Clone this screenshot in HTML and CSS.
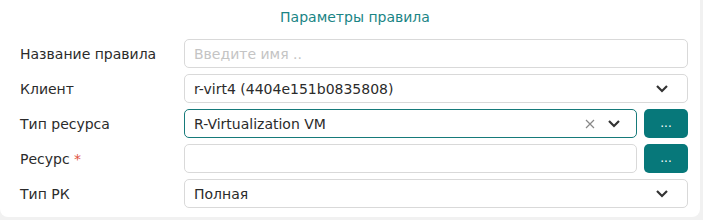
FILE: index.html
```html
<!DOCTYPE html>
<html lang="ru">
<head>
    <meta charset="UTF-8">
    <title>Параметры правила</title>
    <link rel="stylesheet" href="styles.css">
</head>
<body>
    <div class="card">
        <div class="card-title">Параметры правила</div>

        <div class="form">
            <!-- название -->
            <div class="row">
                <label class="label">Название правила</label>
                <div class="control">
                    <input class="field" type="text" placeholder="Введите имя ..">
                </div>
            </div>

            <!-- клиент -->
            <div class="row">
                <label class="label">Клиент</label>
                <div class="control">
                    <div class="field select">
                        <span class="value">r-virt4 (4404e151b0835808)</span>
                        <svg class="chevron" width="14" height="9" viewBox="0 0 14 9"><path d="M2 2l5 5 5-5" fill="none" stroke="#333" stroke-width="2.2"/></svg>
                    </div>
                </div>
            </div>

            <!-- тип ресурса -->
            <div class="row">
                <label class="label">Тип ресурса</label>
                <div class="control">
                    <div class="field select active">
                        <span class="value">R-Virtualization VM</span>
                        <svg class="clear" width="10" height="10" viewBox="0 0 10 10"><path d="M1 1l8 8M9 1l-8 8" fill="none" stroke="#888" stroke-width="1.2"/></svg>
                        <svg class="chevron" width="14" height="9" viewBox="0 0 14 9"><path d="M2 2l5 5 5-5" fill="none" stroke="#333" stroke-width="2.2"/></svg>
                    </div>
                    <button class="btn-more">...</button>
                </div>
            </div>

            <!-- ресурс -->
            <div class="row">
                <label class="label">Ресурс <span class="req">*</span></label>
                <div class="control">
                    <input class="field" type="text">
                    <button class="btn-more">...</button>
                </div>
            </div>

            <!-- тип РК -->
            <div class="row">
                <label class="label">Тип РК</label>
                <div class="control">
                    <div class="field select">
                        <span class="value">Полная</span>
                        <svg class="chevron" width="14" height="9" viewBox="0 0 14 9"><path d="M2 2l5 5 5-5" fill="none" stroke="#333" stroke-width="2.2"/></svg>
                    </div>
                </div>
            </div>
        </div>
    </div>
</body>
</html>
```

FILE: styles.css
```css
/* общие стили */
body, html {
    margin: 0;
    padding: 0;
    background-color: #f1f1f1;
    font-family: 'DejaVu Sans', sans-serif;
    font-size: 14px;
    color: #2b2b2b;
}

/* карточка */
.card {
    width: 700px;
    height: 217px;
    box-sizing: border-box;
    background: #fff;
    border-radius: 0 0 8px 8px;
    padding: 7px 12px 0 20px;
}

.card-title {
    text-align: center;
    color: #1a8585;
    font-size: 14px;
    line-height: 20px;
    margin-bottom: 12px;
    padding-left: 2px;
}

/* форма */
.form {
    display: flex;
    flex-direction: column;
    gap: 6px;
}

.row {
    display: flex;
    align-items: center;
    height: 29px;
}

.label {
    width: 164px;
    flex-shrink: 0;
}

.req {
    color: #e0533f;
}

.control {
    flex: 1;
    display: flex;
    gap: 7px;
    height: 29px;
}

.field {
    flex: 1;
    box-sizing: border-box;
    height: 29px;
    border: 1px solid #d9d9d9;
    border-radius: 5px;
    padding: 0 9px;
    font-family: inherit;
    font-size: 14px;
    color: #2b2b2b;
    background: #fff;
    outline: none;
    margin: 0;
}

.field::placeholder {
    color: #c4c4c4;
}

.select {
    display: flex;
    align-items: center;
    padding-right: 18px;
}

.select .value {
    flex: 1;
}

.select.active {
    border-color: #167a7a;
    padding-right: 15px;
}

.clear {
    margin-right: 12px;
}

.btn-more {
    width: 44px;
    height: 29px;
    border: none;
    border-radius: 5px;
    background: #07787a;
    color: #fff;
    font-family: inherit;
    font-size: 12px;
    padding: 0 0 2px;
    cursor: pointer;
}
```
